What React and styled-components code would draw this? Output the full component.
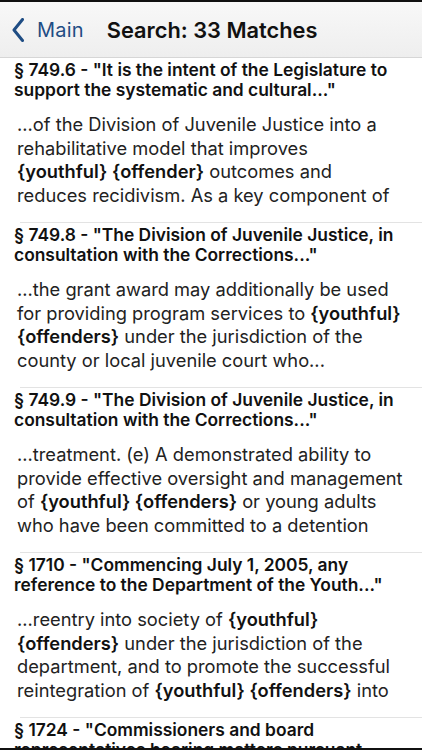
import React from "react";
import styled, { createGlobalStyle } from "styled-components";

const Global = createGlobalStyle`
  html, body { margin: 0; padding: 0; background: #fff; }
  body { font-family: Inter, "Noto Sans", sans-serif; -webkit-font-smoothing: antialiased; }
`;

const Screen = styled.div`
  width: 422px;
  height: 750px;
  overflow: hidden;
  display: flex;
  flex-direction: column;
  border-top: 2px solid #111;
  border-bottom: 2px solid #111;
  box-sizing: border-box;
  background: #fff;
`;

const NavBar = styled.div`
  flex: 0 0 56px;
  display: flex;
  align-items: center;
  background: linear-gradient(to bottom, #f8f8f8, #eeeeee);
  border-bottom: 1px solid #d6d6d6;
  padding-left: 12px;
  box-sizing: border-box;
`;

const Back = styled.div`
  display: flex;
  align-items: center;
  gap: 13px;
  color: #1f4d84;
  font-size: 20px;
  letter-spacing: 0.2px;
`;

const NavTitle = styled.div`
  margin-left: 23px;
  font-size: 21.8px;
  font-weight: 600;
  color: #111;
`;

const List = styled.div`
  flex: 1;
  overflow: hidden;
`;

const Cell = styled.div`
  position: relative;
  height: 165px;
  box-sizing: border-box;
  padding: 2px 4px 0 14px;
  &::after {
    content: "";
    position: absolute;
    left: 20px;
    right: 0;
    bottom: 0;
    height: 1px;
    background: #e3e3e3;
  }
`;

const Title = styled.div`
  font-size: 17.4px;
  font-weight: 600;
  line-height: 19.5px;
  color: #111;
`;

const Snippet = styled.div`
  margin-top: 14px;
  padding-left: 3px;
  font-size: 18.3px;
  line-height: 23.5px;
  color: #222;
  b { font-weight: 600; color: #111; }
`;

const Line = styled.span`
  display: block;
  white-space: nowrap;
`;

const items = [
  {
    title: ['§ 749.6 - "It is the intent of the Legislature to', 'support the systematic and cultural..."'],
    body: [
      ["...of the Division of Juvenile Justice into a"],
      ["rehabilitative model that improves"],
      [{ b: "{youthful} {offender}" }, " outcomes and"],
      ["reduces recidivism. As a key component of"],
    ],
  },
  {
    title: ['§ 749.8 - "The Division of Juvenile Justice, in', 'consultation with the Corrections..."'],
    body: [
      ["...the grant award may additionally be used"],
      ["for providing program services to ", { b: "{youthful}" }],
      [{ b: "{offenders}" }, " under the jurisdiction of the"],
      ["county or local juvenile court who..."],
    ],
  },
  {
    title: ['§ 749.9 - "The Division of Juvenile Justice, in', 'consultation with the Corrections..."'],
    body: [
      ["...treatment. (e) A demonstrated ability to"],
      ["provide effective oversight and management"],
      ["of ", { b: "{youthful} {offenders}" }, " or young adults"],
      ["who have been committed to a detention"],
    ],
  },
  {
    title: ['§ 1710 - "Commencing July 1, 2005, any', 'reference to the Department of the Youth..."'],
    body: [
      ["...reentry into society of ", { b: "{youthful}" }],
      [{ b: "{offenders}" }, " under the jurisdiction of the"],
      ["department, and to promote the successful"],
      ["reintegration of ", { b: "{youthful} {offenders}" }, " into"],
    ],
  },
  {
    title: ['§ 1724 - "Commissioners and board', 'representatives hearing matters pursuant...'],
    body: [],
  },
];

const Chevron = () => (
  <svg width="12" height="24" viewBox="0 0 12 24" fill="none">
    <path d="M10.5 1.5 L2 12 L10.5 22.5" stroke="#1f4d84" strokeWidth="3" strokeLinecap="round" strokeLinejoin="round" />
  </svg>
);

export default function App() {
  return (
    <>
      <Global />
      <Screen>
        <NavBar>
          <Back>
            <Chevron />
            <span>Main</span>
          </Back>
          <NavTitle>Search: 33 Matches</NavTitle>
        </NavBar>
        <List>
          {items.map((it, i) => (
            <Cell key={i}>
              <Title>
                {it.title.map((t, j) => (
                  <Line key={j}>{t}</Line>
                ))}
              </Title>
              {it.body.length > 0 && (
                <Snippet>
                  {it.body.map((parts, j) => (
                    <Line key={j}>
                      {parts.map((p, k) => (typeof p === "string" ? <span key={k}>{p}</span> : <b key={k}>{p.b}</b>))}
                    </Line>
                  ))}
                </Snippet>
              )}
            </Cell>
          ))}
        </List>
      </Screen>
    </>
  );
}
